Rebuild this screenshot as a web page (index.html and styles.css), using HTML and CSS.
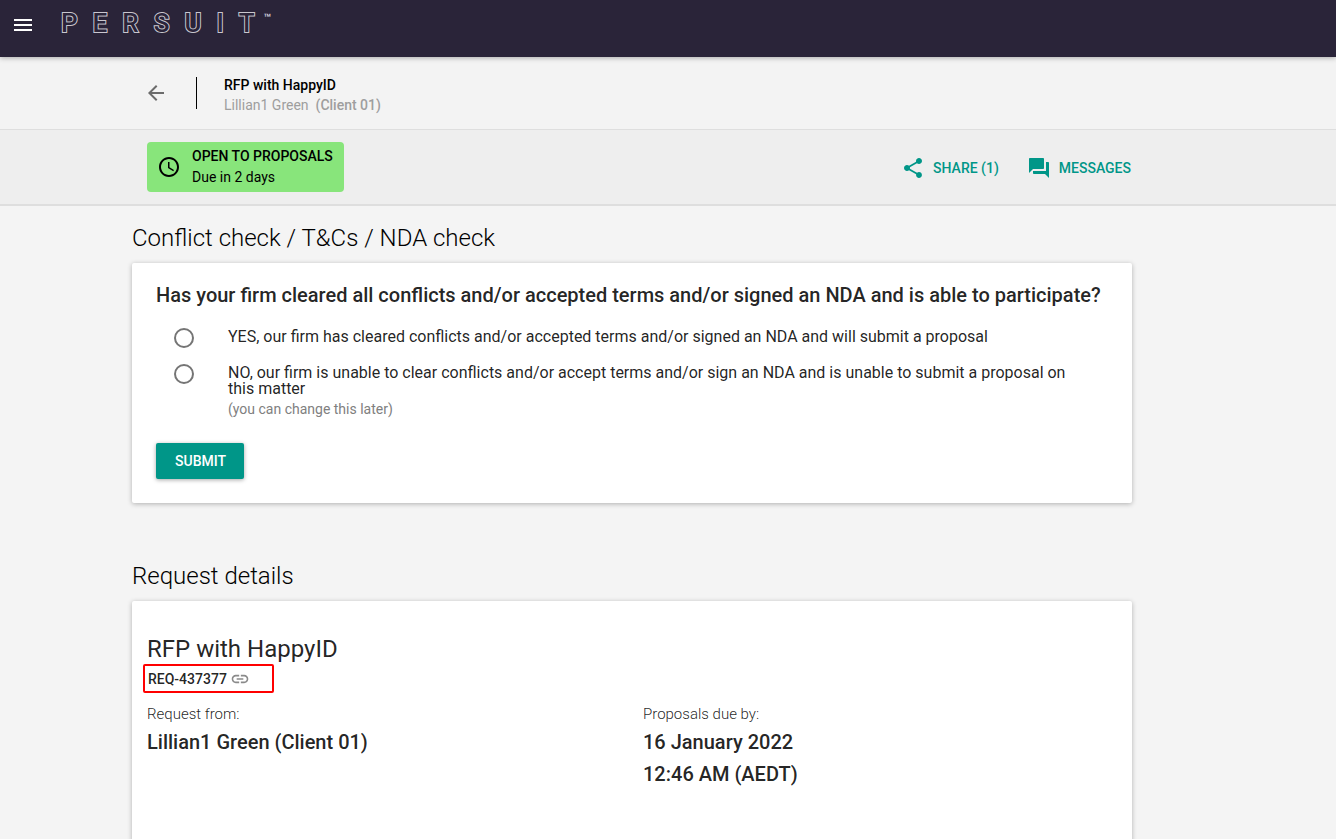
FILE: index.html
```
<!DOCTYPE html>
<html lang="en">
<head>
    <meta charset="UTF-8">
    <meta name="viewport" content="width=device-width, initial-scale=1.0">
    <title>RFP with HappyID - PERSUIT</title>
    <link rel="stylesheet" href="styles.css">
</head>
<body>
    <header class="topbar">
        <button class="icon-button" aria-label="Menu">
            <svg class="icon" viewBox="0 0 24 24"><path d="M3 18h18v-2H3v2zm0-5h18v-2H3v2zm0-7v2h18V6H3z"/></svg>
        </button>
        <a class="logo" href="#" aria-label="PERSUIT">
            <span>P</span><span>E</span><span>R</span><span>S</span><span>U</span><span>I</span><span>T</span><small>™</small>
        </a>
    </header>

    <div class="subheader">
        <div class="container subheader-row">
            <a class="back" href="#" aria-label="Back">
                <svg class="icon" viewBox="0 0 24 24"><path d="M20 11H7.83l5.59-5.59L12 4l-8 8 8 8 1.41-1.41L7.83 13H20v-2z"/></svg>
            </a>
            <div class="subheader-title">
                <div class="name">RFP with HappyID</div>
                <div class="client">Lillian1 Green&nbsp; <b>(Client 01)</b></div>
            </div>
        </div>
    </div>

    <div class="statusbar">
        <div class="container statusbar-row">
            <div class="status">
                <svg class="icon" viewBox="0 0 24 24"><path d="M11.99 2C6.47 2 2 6.48 2 12s4.47 10 9.99 10C17.52 22 22 17.52 22 12S17.52 2 11.99 2zM12 20c-4.42 0-8-3.58-8-8s3.58-8 8-8 8 3.58 8 8-3.58 8-8 8zm.5-13H11v6l5.25 3.15.75-1.23-4.5-2.67z"/></svg>
                <div>
                    <div class="status-label">OPEN TO PROPOSALS</div>
                    <div>Due in 2 days</div>
                </div>
            </div>
            <div class="actions">
                <button class="action">
                    <svg class="icon" viewBox="0 0 24 24"><path d="M18 16.08c-.76 0-1.44.3-1.96.77L8.91 12.7c.05-.23.09-.46.09-.7s-.04-.47-.09-.7l7.05-4.11c.54.5 1.25.81 2.04.81 1.66 0 3-1.34 3-3s-1.34-3-3-3-3 1.34-3 3c0 .24.04.47.09.7L8.04 9.81C7.5 9.31 6.79 9 6 9c-1.66 0-3 1.34-3 3s1.34 3 3 3c.79 0 1.5-.31 2.04-.81l7.12 4.16c-.05.21-.08.43-.08.65 0 1.61 1.31 2.92 2.92 2.92s2.92-1.31 2.92-2.92-1.31-2.92-2.92-2.92z"/></svg>
                    SHARE (1)
                </button>
                <button class="action">
                    <svg class="icon" viewBox="0 0 24 24"><path d="M21 6h-2v9H6v2c0 .55.45 1 1 1h11l4 4V7c0-.55-.45-1-1-1zm-4 6V3c0-.55-.45-1-1-1H3c-.55 0-1 .45-1 1v14l4-4h10c.55 0 1-.45 1-1z"/></svg>
                    MESSAGES
                </button>
            </div>
        </div>
    </div>

    <main class="container">
        <h2 class="section-title">Conflict check / T&amp;Cs / NDA check</h2>
        <form class="card conflict">
            <h3 class="question">Has your firm cleared all conflicts and/or accepted terms and/or signed an NDA and is able to participate?</h3>
            <div class="option">
                <input type="radio" name="conflict" id="conflictYes">
                <label for="conflictYes">YES, our firm has cleared conflicts and/or accepted terms and/or signed an NDA and will submit a proposal</label>
            </div>
            <div class="option">
                <input type="radio" name="conflict" id="conflictNo">
                <label for="conflictNo">NO, our firm is unable to clear conflicts and/or accept terms and/or sign an NDA and is unable to submit a proposal on this matter
                    <span class="hint">(you can change this later)</span>
                </label>
            </div>
            <button type="button" class="submit">SUBMIT</button>
        </form>

        <h2 class="section-title">Request details</h2>
        <section class="card details">
            <h3 class="details-title">RFP with HappyID</h3>
            <div class="req-id">
                REQ-437377
                <a href="#" aria-label="Copy link">
                    <svg viewBox="0 0 24 24"><path d="M3.9 12c0-1.71 1.39-3.1 3.1-3.1h4V7H7c-2.76 0-5 2.24-5 5s2.24 5 5 5h4v-1.9H7c-1.71 0-3.1-1.39-3.1-3.1zM8 13h8v-2H8v2zm9-6h-4v1.9h4c1.71 0 3.1 1.39 3.1 3.1s-1.39 3.1-3.1 3.1h-4V17h4c2.76 0 5-2.24 5-5s-2.24-5-5-5z"/></svg>
                </a>
            </div>
            <div class="details-grid">
                <div>
                    <div class="field-label">Request from:</div>
                    <div class="field-value">Lillian1 Green (Client 01)</div>
                </div>
                <div>
                    <div class="field-label">Proposals due by:</div>
                    <div class="field-value">16 January 2022<br>12:46 AM (AEDT)</div>
                </div>
            </div>
        </section>
    </main>
</body>
</html>
```
FILE: styles.css
```
* {
    box-sizing: border-box;
}

body {
    margin: 0;
    min-height: 100vh;
    background: #f4f4f4;
    color: rgba(0, 0, 0, 0.87);
    font-family: Roboto, "Liberation Sans", sans-serif;
    font-size: 14px;
}

button {
    font: inherit;
    border: none;
    background: none;
    padding: 0;
    cursor: pointer;
}

h2, h3 {
    margin: 0;
}

.icon {
    display: block;
    flex: none;
    width: 24px;
    height: 24px;
    fill: currentColor;
}

/* the page keeps a 72px gutter on the right */
.container {
    max-width: 1072px;
    margin: 0 auto;
    padding-right: 72px;
}

/* hide the bar so the centred column does not shift */
html {
    scrollbar-width: none;
}

/* Top bar */
.topbar {
    position: relative;
    display: flex;
    align-items: flex-start;
    height: 57px;
    padding: 8px 11px;
    gap: 26px;
    background: #2a2439;
    box-shadow: 0 1px 5px rgba(0, 0, 0, 0.3);
}

.icon-button {
    padding: 5px 0;
    color: #fff;
}

/* outlined letters: stroke first, then the bar colour on top */
.logo {
    display: flex;
    gap: 15px;
    font-size: 26px;
    font-weight: 500;
    line-height: 30px;
    color: #2a2439;
    -webkit-text-stroke: 2px #c9c7cf;
    paint-order: stroke fill;
    text-decoration: none;
}

.logo small {
    margin-left: -6px;
    font-size: 12px;
    line-height: 20px;
    font-weight: 500;
    color: #dddbe2;
    -webkit-text-stroke: 0;
}

/* Sub header */
.subheader {
    background: #f3f3f3;
    border-bottom: 1px solid #dedede;
}

.subheader-row {
    display: flex;
    align-items: center;
    height: 72px;
}

.back {
    margin-left: 12px;
    color: #6b6b6b;
}

.subheader-title {
    position: relative;
    margin-left: 28px;
    padding: 4px 0 0 28px;
    line-height: 20px;
}

.subheader-title::before {
    content: '';
    position: absolute;
    left: 0;
    top: 6px;
    height: 32px;
    border-left: 1px solid #000;
}

.name {
    font-weight: 500;
    color: #000;
}

.client {
    color: #9e9e9e;
}

.client b {
    font-weight: 500;
}

/* Status bar */
.statusbar {
    background: #eee;
    border-bottom: 2px solid #dedede;
}

.statusbar-row {
    display: flex;
    align-items: center;
    justify-content: space-between;
    height: 74px;
}

.status {
    display: flex;
    align-items: center;
    gap: 11px;
    margin-left: 15px;
    padding: 4px 11px 4px 10px;
    border-radius: 4px;
    background: #88e57b;
    color: #000;
    line-height: 21px;
}

.status-label {
    font-weight: 500;
}

.actions {
    display: flex;
    gap: 28px;
    padding: 2px 1px 0 0;
}

.action {
    display: flex;
    align-items: center;
    gap: 8px;
    font-weight: 500;
    color: #009688;
}

/* Content */
.section-title {
    padding: 18px 0 10px;
    font-size: 24px;
    font-weight: 300;
    line-height: 29px;
    color: #000;
}

.card {
    background: #fff;
    border-radius: 2px;
    box-shadow: 0 1px 5px rgba(0, 0, 0, 0.28);
}

.conflict {
    margin-bottom: 41px;
    padding: 20px 24px 24px;
}

.question {
    margin-bottom: 20px;
    font-size: 20px;
    font-weight: 500;
    line-height: 24px;
}

.option {
    display: flex;
    align-items: flex-start;
    gap: 34px;
    margin: 0 24px 15px 18px;
    font-size: 16px;
    line-height: 16px;
}

.option input {
    appearance: none;
    flex: none;
    width: 20px;
    height: 20px;
    margin: 1px 0 0;
    border: 2px solid #757575;
    border-radius: 50%;
}

.option input:checked {
    background: radial-gradient(circle, #009688 5px, transparent 6px);
    border-color: #009688;
}

.option label {
    padding-top: 2px;
}

.hint {
    display: block;
    padding-top: 2px;
    font-size: 14px;
    line-height: 20px;
    color: #808080;
}

.submit {
    display: block;
    margin-top: 24px;
    padding: 0 18px 0 19px;
    border-radius: 2px;
    background: #009688;
    box-shadow: 0 1px 4px rgba(0, 0, 0, 0.35);
    color: #fff;
    font-weight: 500;
    line-height: 36px;
}

.details {
    padding: 33px 17px 80px 15px;
}

.details-title {
    font-size: 24px;
    font-weight: 400;
    line-height: 30px;
}

.req-id {
    display: flex;
    align-items: center;
    gap: 3px;
    width: 131px;
    height: 29px;
    margin-left: -4px;
    padding-left: 3px;
    border: 2px solid #f00;
    border-radius: 2px;
    font-weight: 500;
}

.req-id svg {
    display: block;
    width: 20px;
    height: 20px;
    fill: #8a8a8a;
}

.details-grid {
    display: grid;
    grid-template-columns: 1fr 1fr;
    gap: 24px;
    margin-top: 10px;
}

.field-label {
    font-size: 15px;
    font-weight: 300;
    line-height: 23px;
}

.field-value {
    font-size: 20px;
    font-weight: 500;
    line-height: 32px;
}
```
